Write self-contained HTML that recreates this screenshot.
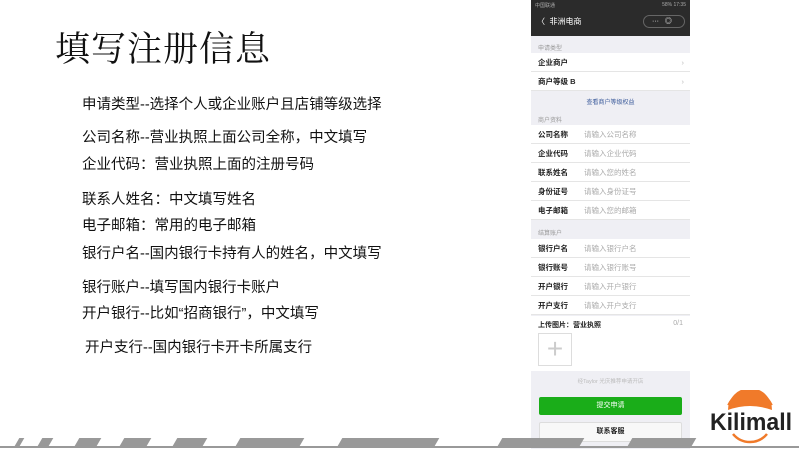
<!DOCTYPE html>
<html><head><meta charset="utf-8"><style>
*{margin:0;padding:0;box-sizing:border-box}
body{width:799px;height:449px;background:#fff;position:relative;overflow:hidden;font-family:"Liberation Sans","Noto Sans CJK SC",sans-serif}
.t{position:absolute;left:55px;top:22px;font-family:"Liberation Serif","Noto Serif CJK SC",serif;font-size:35px;color:#111;letter-spacing:1px}
.l{position:absolute;left:82px;font-size:14.5px;color:#111;white-space:nowrap}
.ph{position:absolute;left:531px;top:0;width:159px;height:449px;background:#efeff4;overflow:hidden;font-size:7px;color:#222}
.ph div{position:absolute}
.row{left:0;width:159px;height:19px;background:#fff;border-bottom:1px solid #e5e5e5;line-height:19px;padding-left:7px;font-size:7.5px;font-weight:bold}
.row span{position:absolute;left:53px;font-weight:normal;color:#aaa}
.row i{position:absolute;right:6px;font-style:normal;color:#bbb;font-weight:normal}
.sec{left:7px;font-size:6px;color:#999}
.st{position:absolute;height:8px;top:438px;background:#999;transform:skewX(-30deg);z-index:5}
</style></head><body>
<div class="t">填写注册信息</div>
<div class="l" style="top:93px">申请类型--选择个人或企业账户且店铺等级选择</div>
<div class="l" style="top:126px">公司名称--营业执照上面公司全称，中文填写</div>
<div class="l" style="top:153px">企业代码：营业执照上面的注册号码</div>
<div class="l" style="top:188px">联系人姓名：中文填写姓名</div>
<div class="l" style="top:214px">电子邮箱：常用的电子邮箱</div>
<div class="l" style="top:242px">银行户名--国内银行卡持有人的姓名，中文填写</div>
<div class="l" style="top:276px">银行账户--填写国内银行卡账户</div>
<div class="l" style="top:302px">开户银行--比如“招商银行”，中文填写</div>
<div class="l" style="top:336px;left:85px">开户支行--国内银行卡开卡所属支行</div>

<div class="ph">
<div style="left:0;top:0;width:159px;height:36px;background:#2b2b2b"></div>
<div style="left:4px;top:2px;font-size:5px;color:#aaa">中国联通</div>
<div style="right:4px;top:2px;font-size:5px;color:#aaa">58% 17:35</div>
<div style="left:6px;top:16px;color:#fff;font-size:8px">〈 &nbsp;非洲电商</div>
<div style="left:112px;top:15px;width:42px;height:13px;border:1px solid #666;border-radius:7px;color:#fff;font-size:7px;line-height:11px;padding-left:8px">··· &nbsp;&nbsp;◎</div>
<div class="sec" style="top:43px">申请类型</div>
<div class="row" style="top:53px">企业商户<i>›</i></div>
<div class="row" style="top:72px">商户等级 B<i>›</i></div>
<div style="left:0;width:159px;top:97px;text-align:center;font-size:6px;color:#3a5a9a">查看商户等级权益</div>
<div class="sec" style="top:115px">商户资料</div>
<div class="row" style="top:125px">公司名称<span>请输入公司名称</span></div>
<div class="row" style="top:144px">企业代码<span>请输入企业代码</span></div>
<div class="row" style="top:163px">联系姓名<span>请输入您的姓名</span></div>
<div class="row" style="top:182px">身份证号<span>请输入身份证号</span></div>
<div class="row" style="top:201px">电子邮箱<span>请输入您的邮箱</span></div>
<div class="sec" style="top:228px">结算账户</div>
<div class="row" style="top:239px">银行户名<span>请输入银行户名</span></div>
<div class="row" style="top:258px">银行账号<span>请输入银行账号</span></div>
<div class="row" style="top:277px">开户银行<span>请输入开户银行</span></div>
<div class="row" style="top:296px">开户支行<span>请输入开户支行</span></div>
<div style="left:0;top:316px;width:159px;height:55px;background:#fff"></div>
<div style="left:7px;top:320px;font-size:7px;font-weight:bold">上传图片：营业执照</div>
<div style="right:7px;top:320px;font-size:7px;color:#aaa">0/1</div>
<div style="left:7px;top:333px;width:34px;height:33px;border:1px solid #ddd;color:#ccc;font-size:28px;line-height:30px;text-align:center;font-weight:100">+</div>
<div style="left:0;width:159px;top:377px;text-align:center;font-size:5.5px;color:#bbb">经Taylor 光庆推荐申请开店</div>
<div style="left:8px;top:397px;width:143px;height:18px;background:#1aad19;border-radius:2px;color:#fff;text-align:center;line-height:18px;font-size:7px">提交申请</div>
<div style="left:8px;top:422px;width:143px;height:20px;background:#f8f8f8;border:1px solid #ddd;border-radius:2px;text-align:center;line-height:18px;font-size:7px;font-weight:bold">联系客服</div>
</div>

<div style="position:absolute;left:0;top:446px;width:799px;height:2px;background:#999;z-index:5"></div>
<div class="st" style="left:17px;width:5px"></div>
<div class="st" style="left:40px;width:11px"></div>
<div class="st" style="left:77px;width:22px"></div>
<div class="st" style="left:122px;width:27px"></div>
<div class="st" style="left:175px;width:30px"></div>
<div class="st" style="left:238px;width:64px"></div>
<div class="st" style="left:340px;width:97px"></div>
<div class="st" style="left:500px;width:82px"></div>
<div class="st" style="left:630px;width:64px"></div>

<svg style="position:absolute;left:700px;top:390px" width="99" height="59">
<path d="M28 20 A22 22 0 0 1 72 20 Q50 12 28 20 Z" fill="#f07a2a"/>
<path d="M30 16 A22 22 0 0 1 70 16" stroke="#f07a2a" stroke-width="6" fill="none"/>
<path d="M33 44 A22 22 0 0 0 67 44" stroke="#f07a2a" stroke-width="2.5" fill="none"/>
<text x="10" y="40" font-family="Liberation Sans" font-weight="bold" font-size="24" fill="#222" textLength="82" lengthAdjust="spacingAndGlyphs">Kilimall</text>
</svg>
</body></html>
